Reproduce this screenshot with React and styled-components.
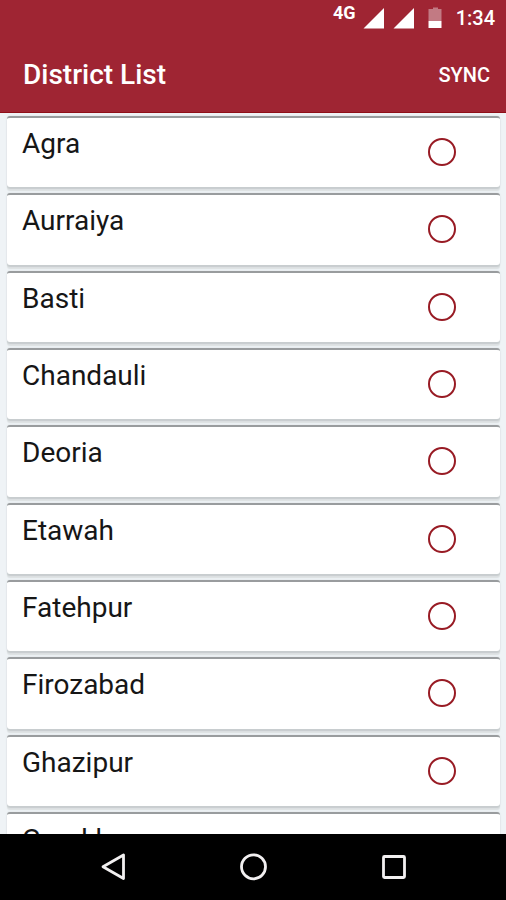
import React from 'react';
import styled, { createGlobalStyle } from 'styled-components';

const districts = [
    'Agra',
    'Aurraiya',
    'Basti',
    'Chandauli',
    'Deoria',
    'Etawah',
    'Fatehpur',
    'Firozabad',
    'Ghazipur',
    'Gorakhpur',
];

const GlobalStyle = createGlobalStyle`
    * {
        box-sizing: border-box;
    }

    body {
        margin: 0;
        font-family: Roboto, "Liberation Sans", sans-serif;
    }
`;

const Screen = styled.div`
    display: flex;
    flex-direction: column;
    height: 100vh;
    background: #eff3f6;
`;

const Header = styled.header`
    flex: none;
    background: #9f2533;
    border-bottom: 1px solid #8e0f18;
    color: #fff;
`;

const StatusBar = styled.div`
    display: flex;
    justify-content: flex-end;
    height: 37px;
    padding: 0 11px 0 0;
`;

const Network = styled.span`
    padding-top: 3px;
    margin-right: 7px;
    font-size: 18px;
    line-height: 20px;
    font-weight: 700;
`;

const StatusIcons = styled.svg`
    display: block;
    width: 80px;
    height: 37px;
    margin-right: 13px;
`;

const Clock = styled.time`
    padding-top: 6px;
    font-size: 20px;
    line-height: 24px;
    font-weight: 500;
`;

const Toolbar = styled.div`
    display: flex;
    align-items: center;
    justify-content: space-between;
    height: 75px;
    padding: 0 16px 0 23px;
`;

const Title = styled.h1`
    margin: 0;
    font-size: 28px;
    line-height: 32px;
    font-weight: 500;
`;

const SyncButton = styled.button`
    padding: 0;
    border: 0;
    background: none;
    color: inherit;
    font-family: inherit;
    font-size: 20px;
    line-height: 24px;
    font-weight: 500;
    cursor: pointer;
`;

/* nine full rows per screen, the next one peeks out below */
const List = styled.ul`
    flex: 1;
    display: grid;
    grid-auto-rows: calc( 100% / 9 );
    min-height: 0;
    margin: 0;
    padding: 3px 6px 22px 7px;
    list-style: none;
    overflow: hidden;
`;

const Row = styled.li`
    padding-bottom: 6px;
`;

const Card = styled.label`
    display: flex;
    align-items: flex-start;
    justify-content: space-between;
    height: 100%;
    padding: 10px 44px 0 15px;
    background: #fff;
    border-top: 2px solid #999c9e;
    border-radius: 3px;
    box-shadow: 0 2px 1px #c8cdcf, 0 4px 1px #dde1e3, 0 0 2px #d9dee0;
    cursor: pointer;
`;

const Name = styled.span`
    color: #161616;
    font-size: 28px;
    line-height: 32px;
`;

const Radio = styled.input`
    appearance: none;
    flex: none;
    width: 28px;
    height: 28px;
    margin: 10px 0 0;
    border: 2px solid #981b24;
    border-radius: 50%;

    &:checked {
        background: radial-gradient( #981b24 50%, transparent 55% );
    }
`;

const NavBar = styled.nav`
    flex: none;
    display: grid;
    grid-template-columns: repeat( 3, 140px );
    justify-content: center;
    height: 66px;
    background: #000;
`;

const NavButton = styled.button`
    display: flex;
    align-items: center;
    justify-content: center;
    padding: 0;
    border: 0;
    background: none;
    color: #f2f0f1;
    cursor: pointer;

    svg {
        display: block;
        fill: none;
        stroke: currentColor;
        stroke-width: 2.8;
        stroke-linejoin: round;
    }
`;

const DistrictRow = ( { name } ) => (
    <Row>
        <Card>
            <Name>{ name }</Name>
            <Radio type="radio" name="district" value={ name } />
        </Card>
    </Row>
);

export default () => (
    <Screen>
        <GlobalStyle />
        <Header>
            <StatusBar>
                <Network>4G</Network>
                <StatusIcons viewBox="0 0 80 37" aria-hidden="true">
                    <path d="M21 8v20.500H0.500z" fill="#fff" />
                    <path d="M51 8v20.500H30.500z" fill="#fff" />
                    <path d="M70 7.500h5v1.500h3.500v12H65.500V9h4.500z" fill="#c27a83" />
                    <path d="M65.500 21h13v7h-13z" fill="#fff" />
                </StatusIcons>
                <Clock>1:34</Clock>
            </StatusBar>
            <Toolbar>
                <Title>District List</Title>
                <SyncButton type="button">SYNC</SyncButton>
            </Toolbar>
        </Header>
        <List>
            {
                districts.map( ( name ) => (
                    <DistrictRow key={ name } name={ name } />
                ))
            }
        </List>
        <NavBar>
            <NavButton type="button" aria-label="Back">
                <svg width="30" height="30" viewBox="0 0 30 30">
                    <path d="M25.500 3v23.500L5 14.800z" />
                </svg>
            </NavButton>
            <NavButton type="button" aria-label="Home">
                <svg width="30" height="30" viewBox="0 0 30 30">
                    <circle cx="15.500" cy="14.800" r="12" />
                </svg>
            </NavButton>
            <NavButton type="button" aria-label="Recent apps">
                <svg width="30" height="30" viewBox="0 0 30 30">
                    <rect x="5.500" y="4.500" width="21" height="21" rx="1" />
                </svg>
            </NavButton>
        </NavBar>
    </Screen>
);
